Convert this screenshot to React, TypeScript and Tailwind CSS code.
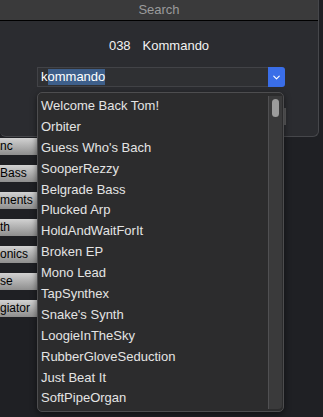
import { ChevronDown } from "lucide-react"

const presets = [
  "Welcome Back Tom!",
  "Orbiter",
  "Guess Who's Bach",
  "SooperRezzy",
  "Belgrade Bass",
  "Plucked Arp",
  "HoldAndWaitForIt",
  "Broken EP",
  "Mono Lead",
  "TapSynthex",
  "Snake's Synth",
  "LoogieInTheSky",
  "RubberGloveSeduction",
  "Just Beat It",
  "SoftPipeOrgan",
]

const categories = ["nc", "Bass", "ments", "th", "onics", "se", "giator"]

export default function App() {
  return (
    <div
      className="relative w-[323px] h-[417px] overflow-hidden bg-[#1f2024]"
      style={{ fontFamily: '"Liberation Sans", Arial, sans-serif' }}
    >
      {/* search window */}
      <div className="w-[319px] h-[137px] rounded-b-[6px] border-r border-b border-[#46474b] bg-[#2b2c30] overflow-hidden">
        <div className="h-[21px] bg-[#3a3a3b] border-b border-black flex items-center justify-center text-[13px] text-[#9b9b9b]">
          Search
        </div>
        <div className="pt-[17px] flex justify-center gap-[12px] text-[13px] text-[#f2f2f2] leading-[16px]">
          <span>038</span>
          <span>Kommando</span>
        </div>
        <div className="mt-[13px] ml-[37px] flex h-[20px] w-[248px]">
          <div className="flex-1 bg-[#2f3033] border border-[#424347] border-r-0 flex items-center pl-[3px] text-[13px] text-white">
            <span>k</span>
            <span className="bg-[#3e5f8a] leading-[16px]">ommando</span>
          </div>
          <div className="w-[17px] bg-[#3a6ee8] rounded-r-[3px] flex items-center justify-center">
            <ChevronDown size={11} strokeWidth={2.5} className="text-white" />
          </div>
        </div>
      </div>

      {/* category buttons behind the menu */}
      <div className="mt-[1px] flex flex-col gap-[10px]">
        {categories.map((c) => (
          <div
            key={c}
            className="h-[17px] w-[37px] bg-gradient-to-b from-[#d2d2d2] to-[#8e8e8e] text-[12px] leading-[17px] text-black pl-0 whitespace-nowrap overflow-hidden"
          >
            {c}
          </div>
        ))}
      </div>

      <div className="absolute left-[284px] top-[108px] w-[2px] h-[17px] bg-[#5a5a5c]" />

      {/* dropdown list */}
      <div className="absolute left-[37px] top-[92px] w-[247px] h-[320px] rounded-[5px] border border-[#4d4d4f] bg-[#2c2c2d] shadow-[0_2px_6px_rgba(0,0,0,0.5)]">
        <div className="pt-[2px] pl-[3px]">
          {presets.map((p) => (
            <div key={p} className="h-[20.9px] leading-[21px] text-[13px] text-[#e4e4e4] whitespace-nowrap">
              {p}
            </div>
          ))}
        </div>
        <div className="absolute right-[1px] top-[3px] bottom-[2px] w-[14px] bg-[#3a3a3b] border-l border-[#505052] rounded-br-[4px]">
          <div className="mt-[3px] mx-auto w-[7px] h-[18px] rounded-full bg-[#9c9c9c]" />
        </div>
      </div>
    </div>
  )
}
